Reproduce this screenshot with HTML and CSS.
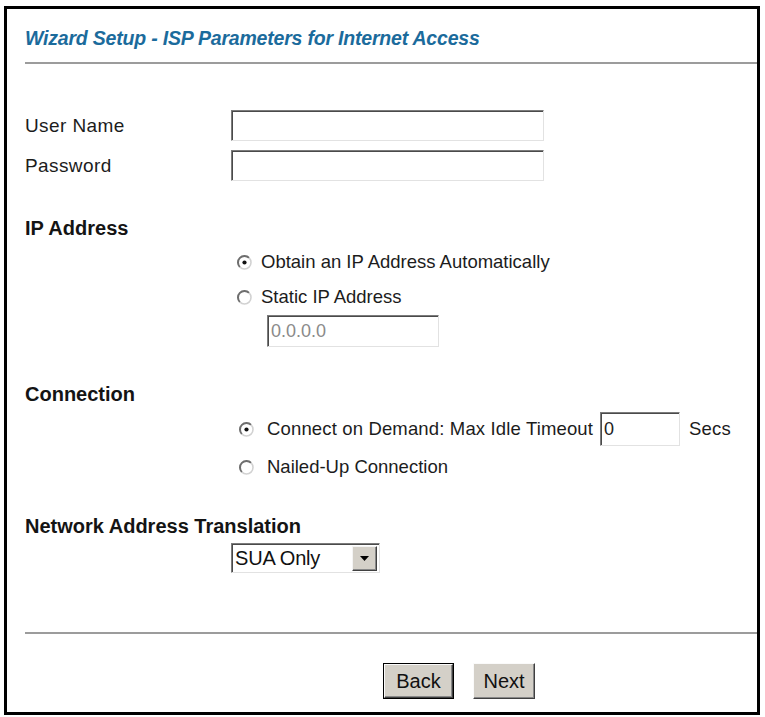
FILE: index.html
```html
<!DOCTYPE html>
<html>
<head>
<meta charset="utf-8">
<title>Wizard Setup - ISP Parameters for Internet Access</title>
<link rel="stylesheet" href="styles.css">
</head>
<body>
<div class="panel">
  <div class="title">Wizard Setup - ISP Parameters for Internet Access</div>
  <div class="rule rule-top"></div>

  <div class="row row-user">
    <span class="label">User Name</span>
    <span class="field field-wide"></span>
  </div>
  <div class="row row-pass">
    <span class="label">Password</span>
    <span class="field field-wide"></span>
  </div>

  <div class="head head-ip">IP Address</div>
  <div class="opt opt-first">
    <svg class="radio" width="15" height="15" viewBox="0 0 15 15"><circle cx="7.5" cy="7.5" r="6.5" fill="#fff"/><path d="M2.9 12.1 A6.5 6.5 0 0 1 12.1 2.9" stroke="#6e6e6e" stroke-width="2" fill="none"/><path d="M12.1 2.9 A6.5 6.5 0 0 1 2.9 12.1" stroke="#d2d2d2" stroke-width="1.6" fill="none"/><circle cx="7.5" cy="7.5" r="2.1" fill="#111"/></svg>
    <span class="opt-text">Obtain an IP Address Automatically</span>
  </div>
  <div class="opt opt-static">
    <svg class="radio" width="15" height="15" viewBox="0 0 15 15"><circle cx="7.5" cy="7.5" r="6.5" fill="#fff"/><path d="M2.9 12.1 A6.5 6.5 0 0 1 12.1 2.9" stroke="#6e6e6e" stroke-width="2" fill="none"/><path d="M12.1 2.9 A6.5 6.5 0 0 1 2.9 12.1" stroke="#d2d2d2" stroke-width="1.6" fill="none"/></svg>
    <span class="opt-text">Static IP Address</span>
  </div>
  <div class="field field-ip"><span class="ip-val">0.0.0.0</span></div>

  <div class="head head-conn">Connection</div>
  <div class="opt opt-demand">
    <svg class="radio" width="15" height="15" viewBox="0 0 15 15"><circle cx="7.5" cy="7.5" r="6.5" fill="#fff"/><path d="M2.9 12.1 A6.5 6.5 0 0 1 12.1 2.9" stroke="#6e6e6e" stroke-width="2" fill="none"/><path d="M12.1 2.9 A6.5 6.5 0 0 1 2.9 12.1" stroke="#d2d2d2" stroke-width="1.6" fill="none"/><circle cx="7.5" cy="7.5" r="2.1" fill="#111"/></svg>
    <span class="opt-text wide-gap">Connect on Demand: Max Idle Timeout</span>
    <span class="field field-timeout"><span class="t-val">0</span></span>
    <span class="secs">Secs</span>
  </div>
  <div class="opt opt-nailed">
    <svg class="radio" width="15" height="15" viewBox="0 0 15 15"><circle cx="7.5" cy="7.5" r="6.5" fill="#fff"/><path d="M2.9 12.1 A6.5 6.5 0 0 1 12.1 2.9" stroke="#6e6e6e" stroke-width="2" fill="none"/><path d="M12.1 2.9 A6.5 6.5 0 0 1 2.9 12.1" stroke="#d2d2d2" stroke-width="1.6" fill="none"/></svg>
    <span class="opt-text wide-gap">Nailed-Up Connection</span>
  </div>

  <div class="head head-nat">Network Address Translation</div>
  <div class="select">
    <span class="select-val">SUA Only</span>
    <span class="select-btn"><svg width="9" height="5" viewBox="0 0 9 5"><path d="M0 0 H9 L4.5 5 Z" fill="#000"/></svg></span>
  </div>

  <div class="rule rule-bottom"></div>

  <div class="buttons">
    <span class="btn btn-default"><span class="btn-inner">Back</span></span>
    <span class="btn btn-next"><span class="btn-inner">Next</span></span>
  </div>
</div>
</body>
</html>
```

FILE: styles.css
```css
html, body {
  background: #fff;
}
body {
  margin: 6px 0 0 4px;
  font-family: "Liberation Sans", Arial, sans-serif;
  color: #1c1c1c;
}
.panel {
  width: 756px;
  height: 709px;
  box-sizing: border-box;
  border: 3px solid #000;
  padding-left: 18px;
  display: flex;
  flex-direction: column;
  align-items: flex-start;
}
.title {
  margin-top: 19px;
  height: 20px;
  line-height: 20px;
  font-size: 19.5px;
  font-weight: bold;
  font-style: italic;
  letter-spacing: -0.2px;
  color: #1b6b9c;
  white-space: nowrap;
}
.rule {
  align-self: stretch;
  height: 2px;
  background: #9c9c9c;
}
.rule-top { margin-top: 14px; }
.rule-bottom { margin-top: 59px; }

.row {
  display: flex;
  align-items: center;
  height: 31px;
}
.row-user { margin-top: 46px; }
.row-pass { margin-top: 9px; }
.label {
  width: 206px;
  font-size: 19px;
  letter-spacing: 0.4px;
}
.field {
  display: block;
  box-sizing: border-box;
  background: #fff;
  border: 1px solid;
  border-color: #7c7c7c #e2e2e2 #e2e2e2 #7c7c7c;
  box-shadow: inset 1px 1px 0 #4a4a4a;
}
.field-wide {
  width: 313px;
  height: 31px;
}
.head {
  height: 24px;
  line-height: 24px;
  font-size: 20px;
  font-weight: bold;
  color: #141414;
  margin-top: 35px;
}
.opt {
  display: flex;
  align-items: center;
  height: 24px;
  margin-left: 212px;
  font-size: 18.5px;
}
.opt .radio {
  flex: none;
  margin-right: 9px;
}
.opt-first { margin-top: 10px; }
.opt-static { margin-top: 11px; }
.opt-demand {
  margin-top: 6px;
  height: 34px;
  margin-left: 214px;
  letter-spacing: 0.15px;
}
.opt-nailed {
  margin-top: 9px;
  margin-left: 214px;
}
.opt .wide-gap { margin-left: 4px; }
.field-ip {
  margin-top: 6px;
  margin-left: 242px;
  width: 172px;
  height: 32px;
  display: flex;
  align-items: center;
  padding-left: 3px;
}
.ip-val {
  font-size: 18px;
  color: #8a8a8a;
}
.field-timeout {
  margin-left: 7px;
  width: 80px;
  height: 34px;
  display: flex;
  align-items: center;
  padding-left: 3px;
}
.t-val {
  font-size: 18px;
  color: #222;
}
.secs {
  margin-left: 9px;
}
.select {
  margin-top: 5px;
  margin-left: 206px;
  width: 149px;
  height: 30px;
  box-sizing: border-box;
  display: flex;
  align-items: center;
  justify-content: space-between;
  background: #fff;
  border: 1px solid;
  border-color: #7c7c7c #e2e2e2 #e2e2e2 #7c7c7c;
  box-shadow: inset 1px 1px 0 #4a4a4a;
  padding: 2px 2px 1px 3px;
}
.select-val {
  font-size: 20px;
  letter-spacing: -0.2px;
  color: #111;
}
.select-btn {
  width: 25px;
  height: 100%;
  box-sizing: border-box;
  background: #d4d0c8;
  border: 1px solid;
  border-color: #f4f4f4 #404040 #404040 #f4f4f4;
  box-shadow: inset -1px -1px 0 #888;
  display: flex;
  align-items: center;
  justify-content: center;
}
.buttons {
  display: flex;
  margin-top: 29px;
  margin-left: 358px;
  gap: 19px;
}
.btn {
  box-sizing: border-box;
  height: 36px;
  display: flex;
  font-size: 20px;
  color: #111;
}
.btn-inner {
  flex: 1;
  display: flex;
  align-items: center;
  justify-content: center;
  background: #d4d0c8;
  border: 1px solid;
  border-color: #fafafa #404040 #404040 #fafafa;
  box-shadow: inset -1px -1px 0 #888;
}
.btn-default {
  width: 71px;
  border: 1px solid #000;
}
.btn-next {
  width: 62px;
}
```
